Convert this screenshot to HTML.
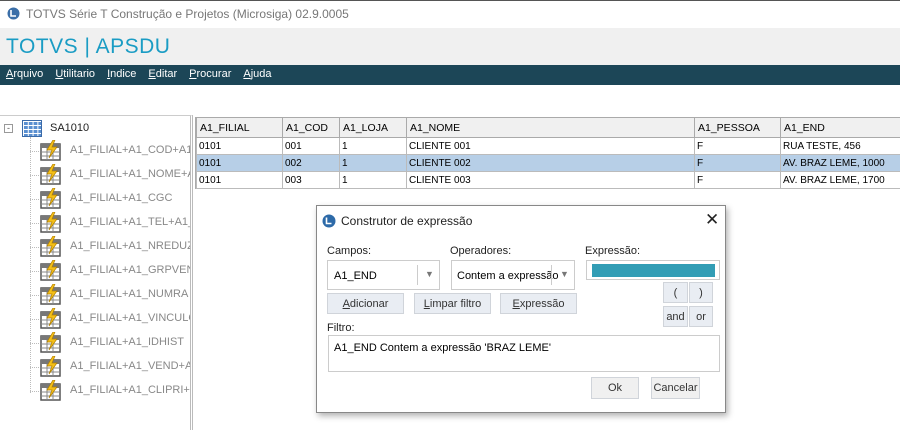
<!DOCTYPE html>
<html><head><meta charset="utf-8"><style>
*{box-sizing:border-box;margin:0;padding:0}
body{width:900px;height:430px;overflow:hidden;background:#fff;font-family:"Liberation Sans",Arial,sans-serif;position:relative;font-size:11px}
.abs{position:absolute}
.title{left:0;top:0;width:900px;height:28px;background:#fff;color:#777;font-size:12px;border-top:1px solid #555}
.hdr{left:0;top:28px;width:900px;height:37px;background:#f0f0f0;color:#1a9cc4;font-size:21px;padding:7px 0 0 6px;letter-spacing:0.5px}
.menu{left:0;top:65px;width:900px;height:20px;background:#1c4657;color:#fff;font-size:11px;padding:3px 0 0 6px}
.menu span{margin-right:12px}
.tree{left:0;top:115px;width:193px;height:315px;border-top:1px solid #ccc;border-right:3px double #bbb}
.item{position:absolute;left:70px;color:#888;font-size:11px;white-space:nowrap;overflow:hidden;width:120px}
.ic{position:absolute;left:40px;width:22px;height:21px}
.grid{left:195px;top:117px;width:705px;border-left:1px solid #aaa}
table{border-collapse:collapse;font-size:10px;width:705px;table-layout:fixed}
th{background:#f0f0f0;border:1px solid #aaa;height:20px;font-weight:normal;text-align:left;padding-left:3px;font-size:10.5px}
td{border:1px solid #bbb;height:17px;padding-left:2px}
tr.sel td{background:#b7cfe7}
.dlg{left:316px;top:205px;width:410px;height:208px;background:#fff;border:1px solid #888;box-shadow:2px 3px 6px rgba(0,0,0,.3)}
.btn{position:absolute;background:#e9edf3;border:1px solid #d0d4da;text-align:center;font-size:11px;color:#333;padding-top:4px}
.lbl{position:absolute;font-size:11px;color:#222}
.box{position:absolute;border:1px solid #ccc;background:#fff}
</style></head><body>
<div class="abs title">
<svg class="abs" style="left:7px;top:6px" width="13" height="13"><circle cx="6.5" cy="6.5" r="6" fill="#3b6fa8"/><path d="M4 3v6h5" stroke="#fff" stroke-width="1.6" fill="none"/></svg>
<span class="abs" style="left:26px;top:6px">TOTVS Série T Construção e Projetos (Microsiga) 02.9.0005</span></div>
<div class="abs hdr">TOTVS | APSDU</div>
<div class="abs menu"><span><u>A</u>rquivo</span><span><u>U</u>tilitario</span><span><u>I</u>ndice</span><span><u>E</u>ditar</span><span><u>P</u>rocurar</span><span><u>A</u>juda</span></div>
<div class="abs tree">
<div class="abs" style="left:4px;top:8px;width:9px;height:9px;border:1px solid #999;font-size:9px;line-height:6px;text-align:center;color:#555">-</div>
<div class="abs" style="left:22px;top:4px;width:20px;height:17px;background:#5a8fd0;border:1px solid #3a6aa8;background-image:linear-gradient(#fff 1px,transparent 1px),linear-gradient(90deg,#fff 1px,transparent 1px);background-size:4.8px 4px"></div>
<div class="abs" style="left:50px;top:6px;font-size:11px;color:#222">SA1010</div>
<div class="abs" style="left:30px;top:21px;width:1px;height:256px;border-left:1px dotted #bbb"></div>
<div id="items"></div>
</div>
<div class="abs grid"><table>
<colgroup><col style="width:86px"><col style="width:57px"><col style="width:67px"><col style="width:288px"><col style="width:86px"><col style="width:121px"></colgroup>
<tr><th>A1_FILIAL</th><th>A1_COD</th><th>A1_LOJA</th><th>A1_NOME</th><th>A1_PESSOA</th><th>A1_END</th></tr>
<tr><td>0101</td><td>001</td><td>1</td><td>CLIENTE 001</td><td>F</td><td>RUA TESTE, 456</td></tr>
<tr class="sel"><td>0101</td><td>002</td><td>1</td><td>CLIENTE 002</td><td>F</td><td>AV. BRAZ LEME, 1000</td></tr>
<tr><td>0101</td><td>003</td><td>1</td><td>CLIENTE 003</td><td>F</td><td>AV. BRAZ LEME, 1700</td></tr>
</table></div>
<div class="abs dlg">
<svg class="abs" style="left:5px;top:8px" width="14" height="14"><circle cx="7" cy="7" r="6.5" fill="#2d6aa8"/><path d="M4.5 3.5v6h5" stroke="#fff" stroke-width="1.6" fill="none"/></svg>
<div class="lbl" style="left:24px;top:8px;font-size:12px">Construtor de expressão</div>
<div class="lbl" style="left:388px;top:4px;font-size:17px">✕</div>
<div class="lbl" style="left:10px;top:39px">Campos:</div>
<div class="lbl" style="left:133px;top:39px">Operadores:</div>
<div class="lbl" style="left:268px;top:39px">Expressão:</div>
<div class="box" style="left:10px;top:54px;width:113px;height:30px"><span class="abs" style="left:6px;top:9px">A1_END</span><div class="abs" style="left:89px;top:4px;width:1px;height:20px;background:#ccc"></div><span class="abs" style="left:97px;top:8px;color:#777;font-size:9px">▼</span></div>
<div class="box" style="left:134px;top:54px;width:124px;height:30px"><span class="abs" style="left:5px;top:9px">Contem a expressão</span><div class="abs" style="left:99px;top:4px;width:1px;height:20px;background:#ccc"></div><span class="abs" style="left:108px;top:8px;color:#777;font-size:9px">▼</span></div>
<div class="box" style="left:269px;top:54px;width:134px;height:20px"><div class="abs" style="left:5px;top:3px;width:123px;height:13px;background:#329db5"></div></div>
<div class="btn" style="left:10px;top:87px;width:77px;height:21px"><u>A</u>dicionar</div>
<div class="btn" style="left:97px;top:87px;width:77px;height:21px"><u>L</u>impar filtro</div>
<div class="btn" style="left:183px;top:87px;width:77px;height:21px"><u>E</u>xpressão</div>
<div class="btn" style="left:346px;top:76px;width:25px;height:21px">(</div>
<div class="btn" style="left:372px;top:76px;width:24px;height:21px">)</div>
<div class="btn" style="left:346px;top:100px;width:25px;height:21px">and</div>
<div class="btn" style="left:372px;top:100px;width:24px;height:21px">or</div>
<div class="lbl" style="left:10px;top:116px">Filtro:</div>
<div class="box" style="left:11px;top:129px;width:392px;height:37px"><span class="abs" style="left:5px;top:6px">A1_END Contem a expressão 'BRAZ LEME'</span></div>
<div class="btn" style="left:274px;top:171px;width:48px;height:22px;background:#f0f0f0">Ok</div>
<div class="btn" style="left:334px;top:171px;width:49px;height:22px;background:#f0f0f0">Cancelar</div>
</div>
<script>
var n=["A1_FILIAL+A1_COD+A1_LOJA","A1_FILIAL+A1_NOME+A1_LOJA","A1_FILIAL+A1_CGC","A1_FILIAL+A1_TEL+A1_DDD","A1_FILIAL+A1_NREDUZ","A1_FILIAL+A1_GRPVEN","A1_FILIAL+A1_NUMRA","A1_FILIAL+A1_VINCULO","A1_FILIAL+A1_IDHIST","A1_FILIAL+A1_VEND+A1_LOJA","A1_FILIAL+A1_CLIPRI+A1_LOJA"];
var h="";n.forEach(function(t,i){var y=24+i*24;
h+='<div class="abs" style="left:30px;top:'+(y+11)+'px;width:9px;border-top:1px dotted #bbb"></div>';
h+='<svg class="ic" style="top:'+(y)+'px" viewBox="0 0 22 21"><rect x="1" y="4" width="19" height="16" fill="#fff" stroke="#555" stroke-width="1.5"/><rect x="1" y="4" width="19" height="4" fill="#777"/><path d="M1 12h19M1 16h19M7 8v12M13 8v12" stroke="#888" stroke-width="1"/><path d="M13 0l-6 10h5l-3 8 8-11h-5l3-7z" fill="#f5c018" stroke="#b07f00" stroke-width=".7"/></svg>';
h+='<div class="item" style="top:'+(y+4)+'px">'+t+'</div>';});
document.getElementById("items").innerHTML=h;
</script>
</body></html>
